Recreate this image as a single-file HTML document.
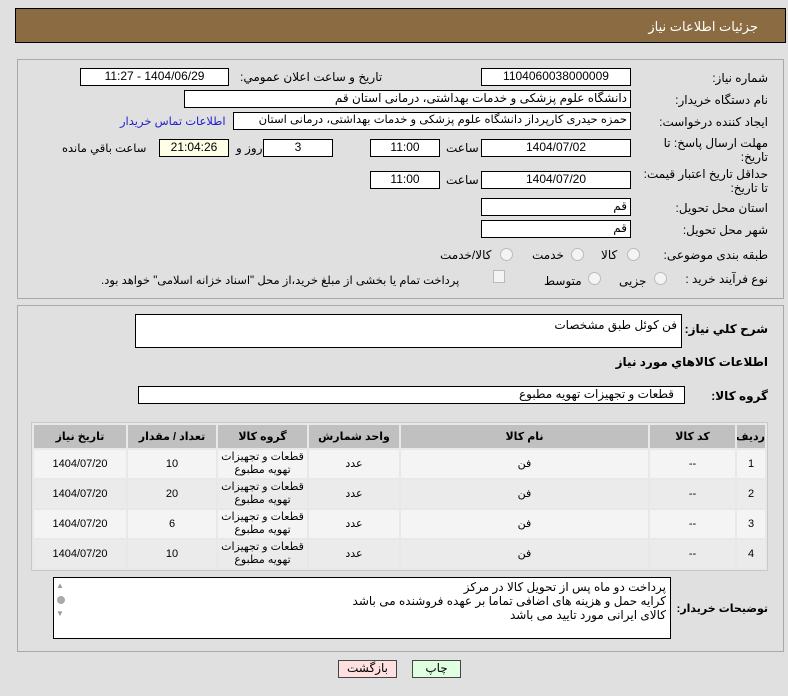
<!DOCTYPE html>
<html><head><meta charset="utf-8"><style>
body{margin:0;width:788px;height:696px;background:#e0e0e0;font-family:"Liberation Sans","DejaVu Sans",sans-serif;font-size:12px;color:#000;position:relative;overflow:hidden}
.a{position:absolute;white-space:nowrap}
.box{position:absolute;background:#fff;border:1px solid #000;box-sizing:border-box;direction:rtl;text-align:center;line-height:15px;font-size:12px;overflow:hidden;white-space:nowrap}
.l{position:absolute;direction:rtl;white-space:nowrap;font-size:12px}
.b{font-weight:bold}
table{border-collapse:separate;border-spacing:2px;position:absolute;left:31px;top:422px;width:737px;direction:rtl;background:#e8e8e8;border:1px solid #c8c8c8;table-layout:fixed}
td,th{text-align:center;font-size:11px;padding:0;overflow:hidden}
th{background:#c0c0c0;height:23px;font-weight:bold}
td{height:28px;line-height:13px}
tr.o td{background:#f4f4f4}
tr.e td{background:#ebebeb}
.rad{position:absolute;width:11px;height:11px;border-radius:50%;border:1px solid #bbb;background:#f4f4f4}
</style></head><body>
<div class="a" style="left:15px;top:8px;width:771px;height:35px;background:#8b6b42;border:1px solid #000;box-sizing:border-box"></div>
<div class="l" style="right:30px;top:19px;color:#fff;font-size:13px">جزئیات اطلاعات نیاز</div>

<div class="a" style="left:17px;top:59px;width:767px;height:240px;border:1px solid #a8a8a8;box-sizing:border-box"></div>
<div class="a" style="left:17px;top:305px;width:767px;height:347px;border:1px solid #a8a8a8;box-sizing:border-box"></div>

<div class="l" style="right:20px;top:71px">شماره نیاز:</div>
<div class="box" style="left:481px;top:68px;width:150px;height:18px">1104060038000009</div>
<div class="l" style="left:240px;top:70px">تاریخ و ساعت اعلان عمومي:</div>
<div class="box" style="left:80px;top:68px;width:149px;height:18px">1404/06/29 - 11:27</div>

<div class="l" style="right:20px;top:93px">نام دستگاه خریدار:</div>
<div class="box" style="left:184px;top:90px;width:447px;height:18px;text-align:right;padding-right:3px">دانشگاه علوم پزشکی و خدمات بهداشتی، درمانی استان قم</div>

<div class="l" style="right:20px;top:115px">ایجاد کننده درخواست:</div>
<div class="box" style="left:233px;top:112px;width:398px;height:18px;text-align:right;padding-right:3px;font-size:11.5px">حمزه حیدری کارپرداز دانشگاه علوم پزشکی و خدمات بهداشتی، درمانی استان</div>
<div class="l" style="left:120px;top:114px;color:#2222cc;font-size:11.5px">اطلاعات تماس خریدار</div>

<div class="l" style="right:20px;top:136px">مهلت ارسال پاسخ: تا</div>
<div class="l" style="right:20px;top:150px">تاریخ:</div>
<div class="box" style="left:481px;top:139px;width:150px;height:18px">1404/07/02</div>
<div class="l" style="left:446px;top:141px">ساعت</div>
<div class="box" style="left:370px;top:139px;width:70px;height:18px">11:00</div>
<div class="box" style="left:263px;top:139px;width:70px;height:18px">3</div>
<div class="l" style="left:236px;top:141px">روز و</div>
<div class="box" style="left:159px;top:139px;width:70px;height:18px;background:#ffffe8">21:04:26</div>
<div class="l" style="left:62px;top:141px;font-size:11.5px">ساعت باقي مانده</div>

<div class="l" style="right:20px;top:167px">حداقل تاریخ اعتبار قیمت:</div>
<div class="l" style="right:20px;top:181px">تا تاریخ:</div>
<div class="box" style="left:481px;top:171px;width:150px;height:18px">1404/07/20</div>
<div class="l" style="left:446px;top:173px">ساعت</div>
<div class="box" style="left:370px;top:171px;width:70px;height:18px">11:00</div>

<div class="l" style="right:20px;top:201px">استان محل تحویل:</div>
<div class="box" style="left:481px;top:198px;width:150px;height:18px;text-align:right;padding-right:3px">قم</div>
<div class="l" style="right:20px;top:223px">شهر محل تحویل:</div>
<div class="box" style="left:481px;top:220px;width:150px;height:18px;text-align:right;padding-right:3px">قم</div>

<div class="l" style="right:20px;top:248px">طبقه بندی موضوعی:</div>
<div class="rad" style="left:627px;top:248px"></div><div class="l" style="left:601px;top:248px">کالا</div>
<div class="rad" style="left:571px;top:248px"></div><div class="l" style="left:532px;top:248px">خدمت</div>
<div class="rad" style="left:500px;top:248px"></div><div class="l" style="left:440px;top:248px">کالا/خدمت</div>

<div class="l" style="right:20px;top:272px">نوع فرآیند خرید :</div>
<div class="rad" style="left:654px;top:272px"></div><div class="l" style="left:619px;top:274px">جزیی</div>
<div class="rad" style="left:588px;top:272px"></div><div class="l" style="left:544px;top:274px">متوسط</div>
<div class="a" style="left:493px;top:270px;width:10px;height:11px;border:1px solid #bbb;background:#f4f4f4"></div>
<div class="l" style="left:101px;top:273px;font-size:11.5px">پرداخت تمام یا بخشی از مبلغ خرید،از محل "اسناد خزانه اسلامی" خواهد بود.</div>

<div class="l b" style="right:20px;top:322px">شرح کلي نیاز:</div>
<div class="box" style="left:135px;top:314px;width:547px;height:34px;text-align:right;padding:3px 4px;line-height:14px">فن کوئل طبق مشخصات</div>
<div class="l b" style="right:20px;top:355px">اطلاعات کالاهاي مورد نیاز</div>
<div class="l b" style="right:20px;top:389px">گروه کالا:</div>
<div class="box" style="left:138px;top:386px;width:547px;height:18px;text-align:right;padding-right:10px">قطعات و تجهیزات تهویه مطبوع</div>

<table>
<colgroup><col style="width:28px"><col style="width:85px"><col style="width:247px"><col style="width:90px"><col style="width:89px"><col style="width:88px"><col></colgroup>
<tr><th>ردیف</th><th>کد کالا</th><th>نام کالا</th><th>واحد شمارش</th><th>گروه کالا</th><th>تعداد / مقدار</th><th>تاریخ نیاز</th></tr>
<tr class="o"><td>1</td><td>--</td><td>فن</td><td>عدد</td><td>قطعات و تجهیزات<br>تهویه مطبوع</td><td>10</td><td>1404/07/20</td></tr>
<tr class="e"><td>2</td><td>--</td><td>فن</td><td>عدد</td><td>قطعات و تجهیزات<br>تهویه مطبوع</td><td>20</td><td>1404/07/20</td></tr>
<tr class="o"><td>3</td><td>--</td><td>فن</td><td>عدد</td><td>قطعات و تجهیزات<br>تهویه مطبوع</td><td>6</td><td>1404/07/20</td></tr>
<tr class="e"><td>4</td><td>--</td><td>فن</td><td>عدد</td><td>قطعات و تجهیزات<br>تهویه مطبوع</td><td>10</td><td>1404/07/20</td></tr>
</table>

<div class="l b" style="right:20px;top:602px;font-size:11px">توضیحات خریدار:</div>
<div class="box" style="left:53px;top:577px;width:618px;height:62px;text-align:right;padding:2px 4px;line-height:14px;font-size:12px">پرداخت دو ماه پس از تحویل کالا در مرکز<br>کرایه حمل و هزینه های اضافی تماما بر عهده فروشنده می باشد<br>کالای ایرانی مورد تایید می باشد</div>
<div class="l" style="left:56px;top:581px;font-size:8px;color:#999">▲</div>
<div class="a" style="left:57px;top:596px;width:8px;height:8px;border-radius:50%;background:#aaa"></div>
<div class="l" style="left:56px;top:609px;font-size:8px;color:#999">▼</div>

<div class="box" style="left:338px;top:660px;width:59px;height:18px;background:#ffe0e0;border-color:#444">بازگشت</div>
<div class="box" style="left:412px;top:660px;width:49px;height:18px;background:#e0ffe0;border-color:#444">چاپ</div>
</body></html>
